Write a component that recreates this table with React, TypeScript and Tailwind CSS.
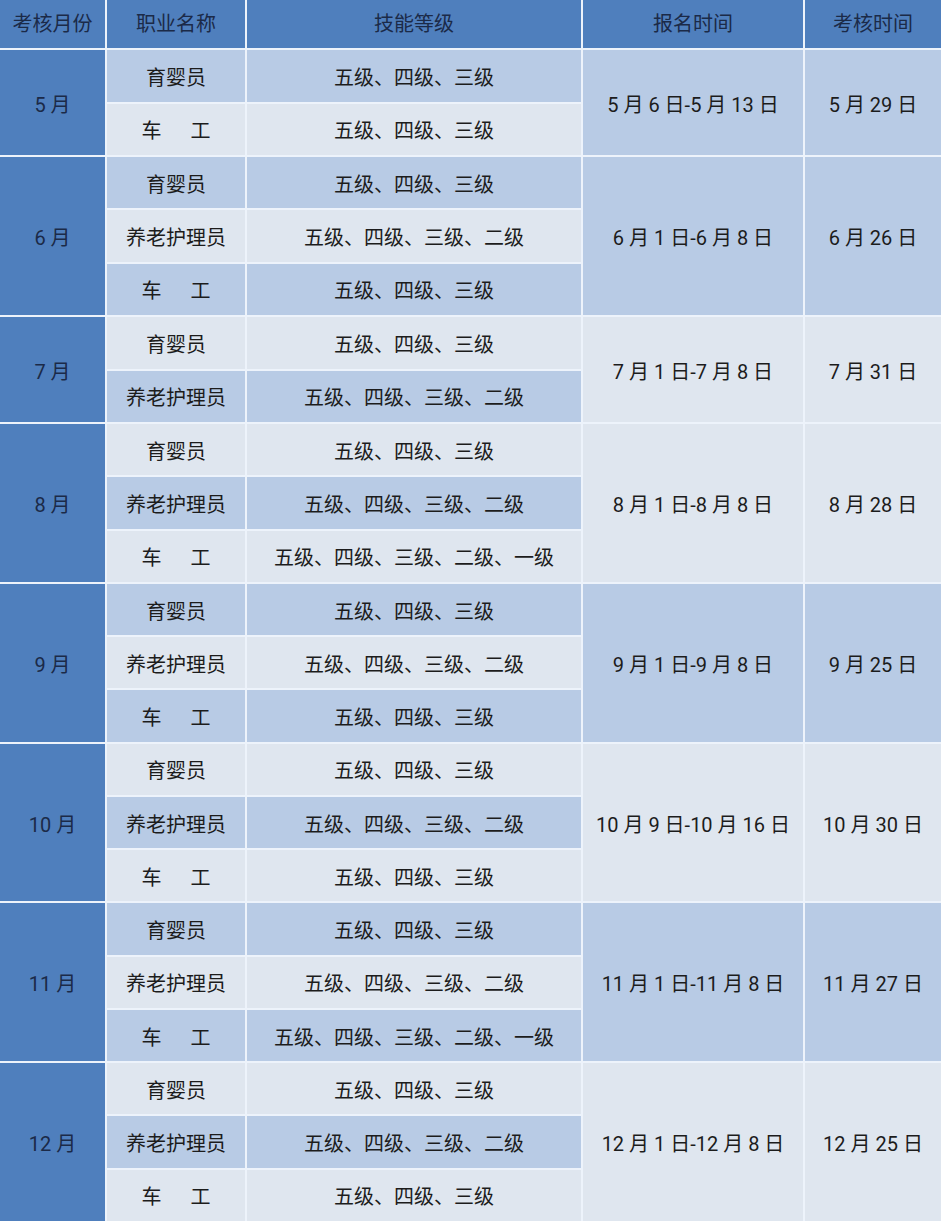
type Job = { name: string; levels: string }
type Group = { month: string; jobs: Job[]; signup: string; exam: string }

const yy: Job = { name: '育婴员', levels: '五级、四级、三级' }
const yl: Job = { name: '养老护理员', levels: '五级、四级、三级、二级' }
const cg: Job = { name: '车工', levels: '五级、四级、三级' }
const cgAll: Job = { name: '车工', levels: '五级、四级、三级、二级、一级' }

const groups: Group[] = [
  { month: '5 月', jobs: [yy, cg], signup: '5 月 6 日-5 月 13 日', exam: '5 月 29 日' },
  { month: '6 月', jobs: [yy, yl, cg], signup: '6 月 1 日-6 月 8 日', exam: '6 月 26 日' },
  { month: '7 月', jobs: [yy, yl], signup: '7 月 1 日-7 月 8 日', exam: '7 月 31 日' },
  { month: '8 月', jobs: [yy, yl, cgAll], signup: '8 月 1 日-8 月 8 日', exam: '8 月 28 日' },
  { month: '9 月', jobs: [yy, yl, cg], signup: '9 月 1 日-9 月 8 日', exam: '9 月 25 日' },
  { month: '10 月', jobs: [yy, yl, cg], signup: '10 月 9 日-10 月 16 日', exam: '10 月 30 日' },
  { month: '11 月', jobs: [yy, yl, cgAll], signup: '11 月 1 日-11 月 8 日', exam: '11 月 27 日' },
  { month: '12 月', jobs: [yy, yl, cg], signup: '12 月 1 日-12 月 8 日', exam: '12 月 25 日' },
]

// 行数 → flex 比例
const growBy: Record<number, string> = { 2: 'grow-[2]', 3: 'grow-[3]' }
const shade = (i: number) => (i % 2 === 0 ? 'bg-[#b8cbe5]' : 'bg-[#dfe6ef]')

function JobName({ name }: { name: string }) {
  if (name === '车工') {
    return (
      <span className="flex gap-[29px]">
        <span>车</span>
        <span>工</span>
      </span>
    )
  }
  return <span>{name}</span>
}

export default function App() {
  let rowIndex = 0

  return (
    <div className="flex h-[1221px] w-[941px] flex-col gap-[2px] bg-[#edf3fb] font-[Roboto,'Noto_Sans_CJK_SC',sans-serif] text-[20px] text-[#1c1c1c]">
      {/* 表头 */}
      <div className="flex h-[48px] shrink-0 gap-[2px] text-[#1b2a48]">
        <div className="flex w-[105px] items-center justify-center bg-[#4f7fbd]">考核月份</div>
        <div className="flex w-[138px] items-center justify-center bg-[#4f7fbd]">职业名称</div>
        <div className="flex w-[334px] items-center justify-center bg-[#4f7fbd]">技能等级</div>
        <div className="flex w-[220px] items-center justify-center bg-[#4f7fbd]">报名时间</div>
        <div className="flex flex-1 items-center justify-center bg-[#4f7fbd]">考核时间</div>
      </div>

      {groups.map((g) => {
        const start = rowIndex
        rowIndex += g.jobs.length
        return (
          <div key={g.month} className={`flex basis-0 gap-[2px] ${growBy[g.jobs.length]}`}>
            <div className="flex w-[105px] items-center justify-center bg-[#4f7fbd] pt-1 text-[#1b2a48]">{g.month}</div>
            <div className="flex w-[474px] flex-col gap-[2px]">
              {g.jobs.map((j, ji) => (
                <div key={ji} className="flex flex-1 gap-[2px]">
                  <div className={`flex w-[138px] items-center justify-center pt-1 ${shade(start + ji)}`}>
                    <JobName name={j.name} />
                  </div>
                  <div className={`flex flex-1 items-center justify-center pt-1 ${shade(start + ji)}`}>{j.levels}</div>
                </div>
              ))}
            </div>
            <div className={`flex w-[220px] items-center justify-center pt-1 ${shade(start)}`}>{g.signup}</div>
            <div className={`flex flex-1 items-center justify-center pt-1 ${shade(start)}`}>{g.exam}</div>
          </div>
        )
      })}
    </div>
  )
}
